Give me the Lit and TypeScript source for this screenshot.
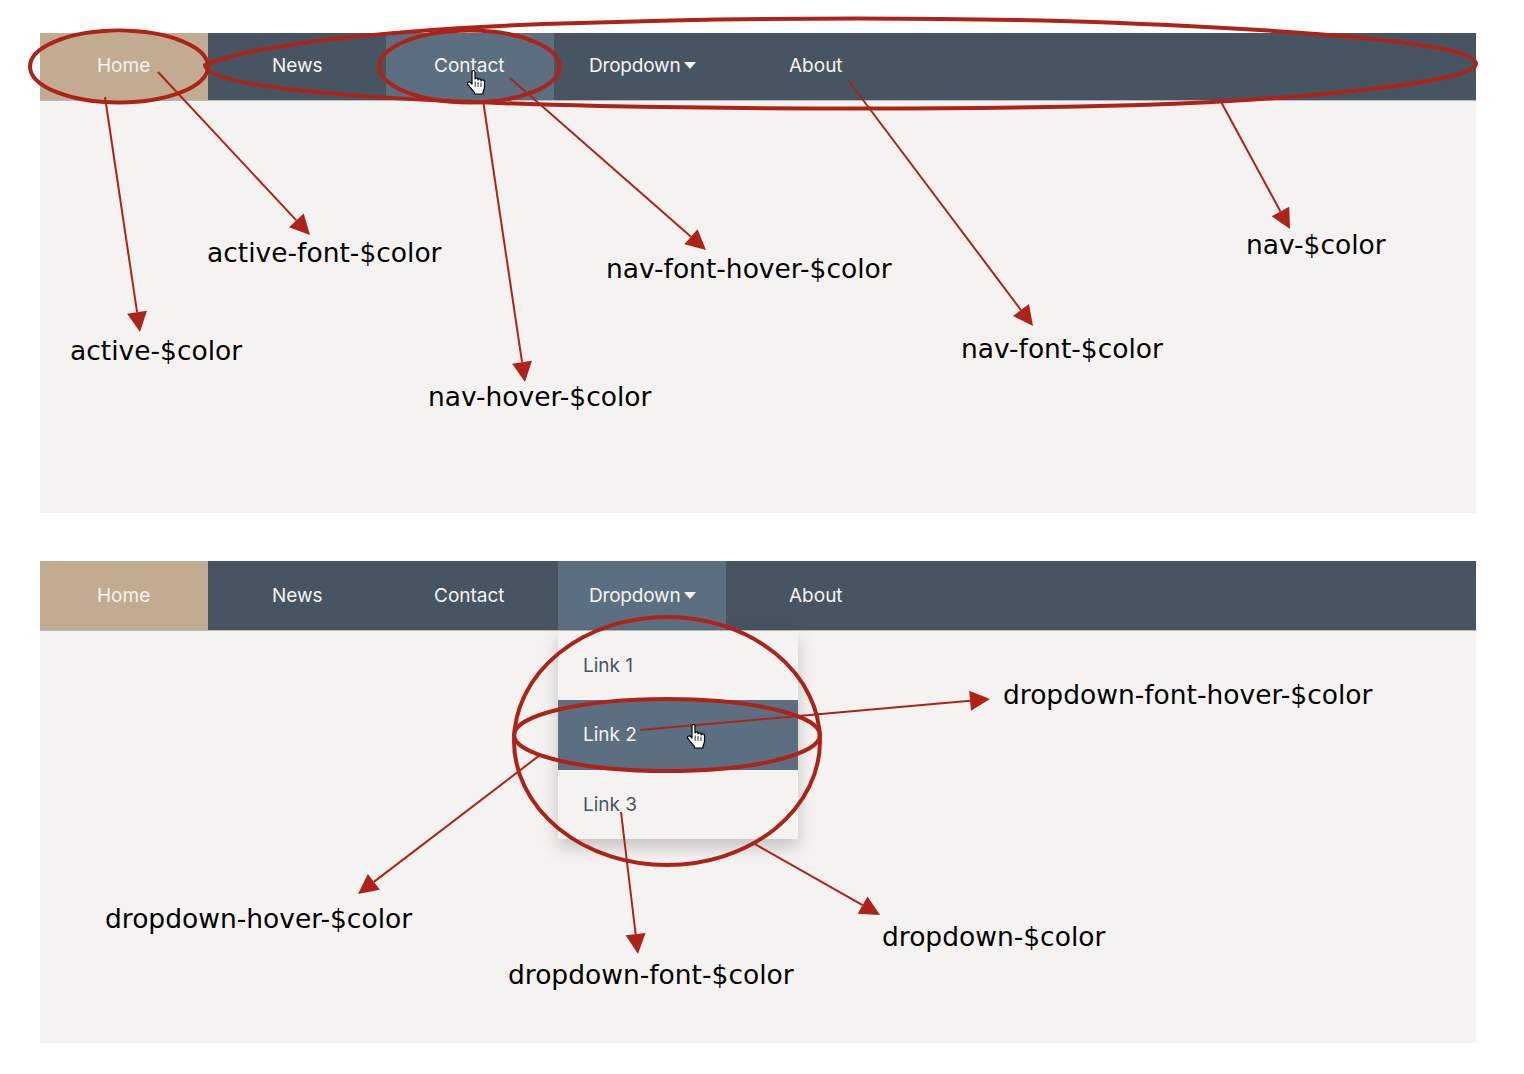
import { LitElement, html, css, svg } from "lit";
import { customElement } from "lit/decorators.js";

const RED = "#ae2318";

const arrows: [number, number, number, number][] = [
  [105, 97, 140, 332],
  [158, 72, 310, 235],
  [483, 100, 525, 382],
  [510, 78, 706, 250],
  [848, 80, 1033, 326],
  [1220, 100, 1290, 229],
  [640, 730, 990, 699],
  [540, 755, 358, 894],
  [621, 812, 638, 954],
  [753, 843, 880, 915],
];

const labels: [string, number, number][] = [
  ["active-font-$color", 207, 253],
  ["nav-font-hover-$color", 606, 269],
  ["nav-$color", 1246, 245],
  ["active-$color", 70, 351],
  ["nav-font-$color", 961, 349],
  ["nav-hover-$color", 428, 397],
  ["dropdown-font-hover-$color", 1003, 695],
  ["dropdown-hover-$color", 105, 919],
  ["dropdown-$color", 882, 937],
  ["dropdown-font-$color", 508, 975],
];

function arrow([x1, y1, x2, y2]: [number, number, number, number]) {
  const a = Math.atan2(y2 - y1, x2 - x1);
  const len = 20;
  const w = 10;
  const bx = x2 - len * Math.cos(a);
  const by = y2 - len * Math.sin(a);
  const nx = -Math.sin(a) * w;
  const ny = Math.cos(a) * w;
  return svg`<line x1=${x1} y1=${y1} x2=${bx} y2=${by} stroke=${RED} stroke-width="2"></line>
    <polygon points="${x2},${y2} ${bx + nx},${by + ny} ${bx - nx},${by - ny}" fill=${RED}></polygon>`;
}

function hand(x: number, y: number) {
  return svg`<g transform="translate(${x} ${y})">
    <path d="M5 2C5 0 8 0 8 2V9C8 7.5 11 7.5 11 9V10C11 8.5 14 8.5 14 10V11C14 9.5 17.5 9.5 17.5 11.5V17C17.5 19 16.5 20.5 16 22V24H7.5V22.5C5 20 3 17 .8 14.5C-.5 12.5 2 11 3.5 12.5L5 14Z"
      fill="#fff" stroke="#000" stroke-width="1.2" stroke-linejoin="round"></path>
    <path d="M8.2 11.5V17M11 12V17M14 12.5V17" stroke="#000" stroke-width=".8" fill="none"></path>
  </g>`;
}

@customElement("nav-panel")
export class NavPanel extends LitElement {
  static properties = { open: { type: Boolean } };
  declare open: boolean;

  static styles = css`
    :host {
      display: block;
      position: relative;
      background: #f5f3f1;
      font-family: Inter, "Liberation Sans", sans-serif;
    }
    .bar {
      display: flex;
      height: 67px;
      background: #465561;
      border-bottom: 1px solid #b4bcc2;
      font-size: 19px;
      color: #f5f3f1;
    }
    :host([open]) .bar {
      height: 69px;
    }
    .item {
      display: flex;
      align-items: center;
      box-sizing: border-box;
      height: 100%;
      flex: none;
      gap: 4px;
      padding-bottom: 2px;
    }
    :host([open]) .item {
      padding-bottom: 1px;
    }
    .home {
      width: 168px;
      padding-left: 57px;
      background: #c2ac91;
    }
    .news {
      width: 178px;
      padding-left: 64px;
    }
    .contact {
      width: 168px;
      margin-right: 4px;
      padding-left: 48px;
    }
    .drop {
      width: 168px;
      padding-left: 31px;
    }
    .about {
      padding-left: 63px;
    }
    .hover {
      background: #5b6f81;
    }
    .name {
      letter-spacing: -0.2px;
    }
    .caret {
      width: 0;
      height: 0;
      border-left: 6px solid transparent;
      border-right: 6px solid transparent;
      border-top: 7px solid #f5f3f1;
    }
    .menu {
      position: absolute;
      top: 70px;
      left: 518px;
      width: 240px;
      background: #f5f3f1;
      box-shadow: 0 8px 16px rgba(0, 0, 0, 0.2);
      font-size: 19px;
      color: #465561;
    }
    .link {
      display: flex;
      align-items: center;
      box-sizing: border-box;
      height: 69.33px;
      padding-left: 25px;
    }
    .link.hover {
      color: #f5f3f1;
    }
  `;

  render() {
    return html`
      <div class="bar">
        <div class="item home">Home</div>
        <div class="item news">News</div>
        <div class="item contact ${this.open ? "" : "hover"}">Contact</div>
        <div class="item drop ${this.open ? "hover" : ""}">
          <span class="name">Dropdown</span><span class="caret"></span>
        </div>
        <div class="item about">About</div>
      </div>
      ${this.open
        ? html`<div class="menu">
            <div class="link">Link 1</div>
            <div class="link hover">Link 2</div>
            <div class="link">Link 3</div>
          </div>`
        : ""}
    `;
  }
}

@customElement("app-root")
export class AppRoot extends LitElement {
  static styles = css`
    :host {
      display: block;
      position: relative;
      height: 1074px;
      background: #fff;
      overflow: hidden;
    }
    .stack {
      display: flex;
      flex-direction: column;
      gap: 48px;
      padding: 33px 48px 0 40px;
    }
    .first {
      height: 480px;
    }
    .second {
      height: 482px;
    }
    .overlay {
      position: absolute;
      inset: 0;
      width: 1524px;
      height: 1074px;
      pointer-events: none;
    }
    .label {
      position: absolute;
      transform: translateY(-50%);
      font-family: "DejaVu Sans", "Liberation Sans", sans-serif;
      font-size: 26.5px;
      line-height: 34px;
      color: #000;
      white-space: nowrap;
    }
  `;

  render() {
    return html`
      <div class="stack">
        <nav-panel class="first"></nav-panel>
        <nav-panel class="second" open></nav-panel>
      </div>
      <svg class="overlay" viewBox="0 0 1524 1074">
        <g fill="none" stroke=${RED} stroke-width="4">
          <ellipse cx="119" cy="66.5" rx="89" ry="36"></ellipse>
          <ellipse cx="469.5" cy="66.5" rx="90" ry="36"></ellipse>
          <path d="M205 65C260 42 420 27 580 23C760 17 960 17 1120 23C1290 30 1476 42 1476 64C1476 82 1300 100 1140 105C960 110 760 109 600 106C430 102 205 92 205 65Z"></path>
          <ellipse cx="667" cy="741" rx="153" ry="124"></ellipse>
          <ellipse cx="667" cy="735" rx="153" ry="36"></ellipse>
        </g>
        ${arrows.map(arrow)} ${hand(467, 70)} ${hand(687, 724)}
      </svg>
      ${labels.map(
        ([t, x, y]) =>
          html`<div class="label" style="left:${x}px;top:${y}px">${t}</div>`
      )}
    `;
  }
}
